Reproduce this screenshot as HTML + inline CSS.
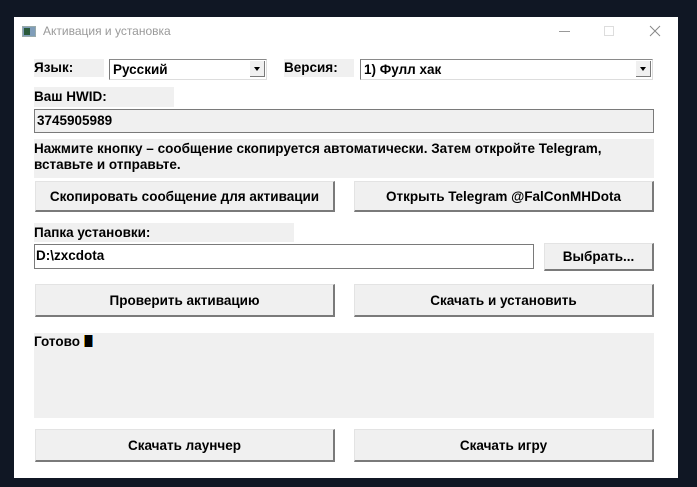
<!DOCTYPE html>
<html><head><meta charset="utf-8"><style>
body{margin:0;width:697px;height:487px;background:#101724;position:relative;overflow:hidden;font-family:"Liberation Sans",sans-serif;}
.win{position:absolute;left:14px;top:17px;width:664px;height:461px;background:#fff;}
.a{position:absolute;box-sizing:border-box;}
.t{font-size:13.5px;font-weight:bold;color:#000;}
.lbl{background:#f0f0f0;}
.btn{background:#f0f0f0;border:1px solid #e3e3e3;border-right:2px solid #7a7a7a;border-bottom:2px solid #7a7a7a;display:flex;align-items:center;justify-content:center;}
.cb{background:#fff;border:1px solid #7a7a7a;border-top-color:#8a8a8a;border-right-color:#ddd;border-bottom-color:#ddd;padding-left:3px;line-height:19px;}
.arr{position:absolute;right:1px;top:1px;width:15px;height:16px;background:#f0f0f0;border-right:1px solid #7a7a7a;border-bottom:1px solid #7a7a7a;box-sizing:border-box;}
.arr:after{content:"";position:absolute;left:4px;top:6px;border-left:3.5px solid transparent;border-right:3.5px solid transparent;border-top:4px solid #000;}
</style></head><body>
<div class="win"></div>
<div class="a" style="left:22px;top:26px;width:14px;height:11px;background:#7f9db9;border:1px solid #9aa;"><div style="position:absolute;left:1px;top:1px;width:6px;height:7px;background:#2a5a3a"></div></div>
<div class="a" style="left:43px;top:24px;font-size:12px;color:#9a9a9a;">Активация и установка</div>
<div class="a" style="left:559px;top:31px;width:11px;height:1px;background:#999"></div>
<div class="a" style="left:604px;top:26px;width:10px;height:10px;border:1px solid #ddd"></div>
<svg class="a" style="left:649px;top:25px" width="12" height="12"><path d="M1 1L11 11M11 1L1 11" stroke="#888" stroke-width="1"/></svg>

<div class="a lbl t" style="left:34px;top:59px;width:70px;height:18px;line-height:18px">Язык:</div>
<div class="a cb t" style="left:109px;top:59px;width:158px;height:21px">Русский<div class="arr"></div></div>
<div class="a lbl t" style="left:284px;top:59px;width:70px;height:18px;line-height:18px">Версия:</div>
<div class="a cb t" style="left:360px;top:59px;width:293px;height:21px">1) Фулл хак<div class="arr"></div></div>

<div class="a lbl t" style="left:34px;top:87px;width:140px;height:20px;line-height:20px">Ваш HWID:</div>
<div class="a t" style="left:34px;top:109px;width:620px;height:24px;background:#f0f0f0;border:1px solid #7a7a7a;padding-left:2px;line-height:21px">3745905989</div>
<div class="a lbl t" style="left:34px;top:139px;width:620px;height:39px;line-height:16px;padding-top:2px">Нажмите кнопку – сообщение скопируется автоматически. Затем откройте Telegram,<br>вставьте и отправьте.</div>

<div class="a btn t" style="left:35px;top:181px;width:300px;height:31px">Скопировать сообщение для активации</div>
<div class="a btn t" style="left:354px;top:181px;width:300px;height:31px">Открыть Telegram @FalConMHDota</div>

<div class="a lbl t" style="left:34px;top:223px;width:260px;height:19px;line-height:19px">Папка установки:</div>
<div class="a t" style="left:34px;top:244px;width:500px;height:25px;background:#fff;border:1px solid #7a7a7a;padding-left:1px;line-height:22px">D:\zxcdota</div>
<div class="a btn t" style="left:544px;top:243px;width:110px;height:28px">Выбрать...</div>

<div class="a btn t" style="left:35px;top:284px;width:300px;height:33px">Проверить активацию</div>
<div class="a btn t" style="left:354px;top:284px;width:300px;height:33px">Скачать и установить</div>

<div class="a lbl t" style="left:34px;top:333px;width:620px;height:85px;line-height:18px">Готово <span style="display:inline-block;width:7px;height:12px;background:#000;border-left:1px solid #c80;border-right:1px solid #38c;vertical-align:-1px"></span></div>

<div class="a btn t" style="left:35px;top:429px;width:300px;height:33px">Скачать лаунчер</div>
<div class="a btn t" style="left:354px;top:429px;width:300px;height:33px">Скачать игру</div>
</body></html>
